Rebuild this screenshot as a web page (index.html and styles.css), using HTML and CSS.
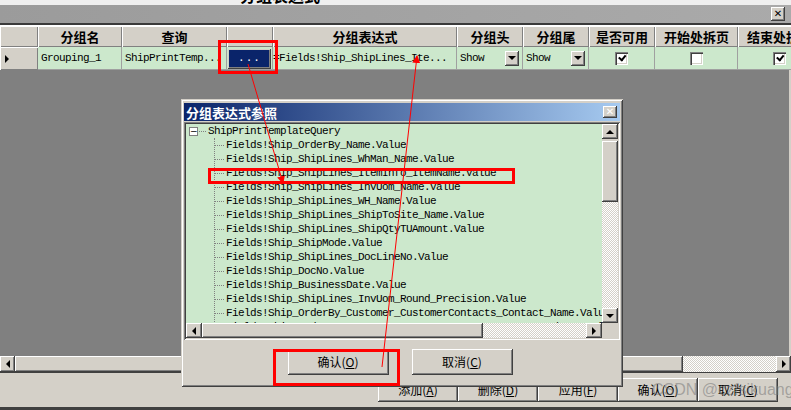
FILE: index.html
```html
<!DOCTYPE html>
<html lang="zh-CN">
<head>
    <meta charset="UTF-8">
    <title>分组表达式</title>
    <link rel="stylesheet" href="styles.css">
</head>
<body>
    <div class="window">
        <div class="caption-strip"><span class="caption-text">分组表达式</span></div>
        <div class="toolbar"><div class="x-btn">✕</div></div>
        <div class="sep"></div>
        <div class="grid">
            <div class="grid-row head">
                <div class="hcell"></div>
                <div class="hcell">分组名</div>
                <div class="hcell">查询</div>
                <div class="hcell"></div>
                <div class="hcell">分组表达式</div>
                <div class="hcell">分组头</div>
                <div class="hcell">分组尾</div>
                <div class="hcell">是否可用</div>
                <div class="hcell">开始处拆页</div>
                <div class="hcell">结束处拆页</div>
            </div>
            <div class="grid-row data">
                <div class="rowhead"><span class="arrow-right"></span></div>
                <div class="cell">Grouping_1</div>
                <div class="cell">ShipPrintTemp...</div>
                <div class="cell btn-cell"><div class="dots-btn">...</div></div>
                <div class="cell expr">=Fields!Ship_ShipLines_Ite...</div>
                <div class="cell combo"><span>Show</span><span class="drop-btn"><span class="arrow-down"></span></span></div>
                <div class="cell combo"><span>Show</span><span class="drop-btn"><span class="arrow-down"></span></span></div>
                <div class="cell center"><span class="check on"></span></div>
                <div class="cell center"><span class="check"></span></div>
                <div class="cell center"><span class="check on"></span></div>
            </div>
        </div>
        <div class="grid-empty"></div>
        <div class="hscroll">
            <div class="sb-btn"><span class="arrow-left"></span></div>
            <div class="sb-thumb main-thumb"></div>
            <div class="sb-track"></div>
            <div class="sb-btn"><span class="arrow-right"></span></div>
        </div>
        <div class="footer">
            <div class="btn">添加(<u>A</u>)</div>
            <div class="btn">删除(<u>D</u>)</div>
            <div class="btn">应用(<u>F</u>)</div>
            <div class="btn">确认(<u>O</u>)</div>
            <div class="btn">取消(<u>C</u>)</div>
        </div>
    </div>

    <div class="watermark">CSDN @czfsikuang</div>

    <div class="dialog">
        <div class="dlg-title">
            <span>分组表达式参照</span>
            <div class="x-btn small">✕</div>
        </div>
        <div class="tree-pane">
            <div class="tree">
                <div class="root"><span class="expander">−</span><span class="root-link"></span>ShipPrintTemplateQuery</div>
                <div class="children">
                    <div class="item">Fields!Ship_OrderBy_Name.Value</div>
                    <div class="item">Fields!Ship_ShipLines_WhMan_Name.Value</div>
                    <div class="item">Fields!Ship_ShipLines_ItemInfo_ItemName.Value</div>
                    <div class="item">Fields!Ship_ShipLines_InvUom_Name.Value</div>
                    <div class="item">Fields!Ship_ShipLines_WH_Name.Value</div>
                    <div class="item">Fields!Ship_ShipLines_ShipToSite_Name.Value</div>
                    <div class="item">Fields!Ship_ShipLines_ShipQtyTUAmount.Value</div>
                    <div class="item">Fields!Ship_ShipMode.Value</div>
                    <div class="item">Fields!Ship_ShipLines_DocLineNo.Value</div>
                    <div class="item">Fields!Ship_DocNo.Value</div>
                    <div class="item">Fields!Ship_BusinessDate.Value</div>
                    <div class="item">Fields!Ship_ShipLines_InvUom_Round_Precision.Value</div>
                    <div class="item">Fields!Ship_OrderBy_Customer_CustomerContacts_Contact_Name.Value</div>
                    <div class="item">Fields!Ship_OrderBy_Customer_CustomerContacts_Contact_Phone.Value</div>
                </div>
            </div>
            <div class="vscroll">
                <div class="sb-btn"><span class="arrow-up"></span></div>
                <div class="sb-thumb v-thumb"></div>
                <div class="sb-track"></div>
                <div class="sb-btn"><span class="arrow-down"></span></div>
            </div>
            <div class="hscroll small">
                <div class="sb-btn"><span class="arrow-left"></span></div>
                <div class="sb-thumb h-thumb"></div>
                <div class="sb-track"></div>
                <div class="sb-btn"><span class="arrow-right"></span></div>
            </div>
            <div class="corner"></div>
        </div>
        <div class="dlg-buttons">
            <div class="btn wide">确认(<u>O</u>)</div>
            <div class="btn wide">取消(<u>C</u>)</div>
        </div>
    </div>

    <svg class="marks" width="791" height="410" viewBox="0 0 791 410">
        <defs>
            <marker id="head" markerWidth="8" markerHeight="8" refX="7" refY="4" orient="auto" markerUnits="userSpaceOnUse">
                <path d="M0,0 L8,4 L0,8 z" fill="#ff0000"/>
            </marker>
        </defs>
        <rect x="219.5" y="41.5" width="57" height="31" fill="none" stroke="#ff0000" stroke-width="3"/>
        <rect x="209.5" y="169.5" width="304" height="13" fill="none" stroke="#ff0000" stroke-width="3"/>
        <rect x="274.5" y="350.5" width="124" height="34" fill="none" stroke="#ff0000" stroke-width="3"/>
        <line x1="248" y1="64" x2="283" y2="183" stroke="#ff0000" stroke-width="1" marker-end="url(#head)"/>
        <line x1="382" y1="367" x2="417" y2="56" stroke="#ff0000" stroke-width="1" marker-end="url(#head)"/>
    </svg>
</body>
</html>
```

FILE: styles.css
```css
* {
    box-sizing: border-box;
}
body {
    margin: 0;
    width: 791px;
    height: 410px;
    overflow: hidden;
    position: relative;
    background-color: #d4d0c8;
    font-family: "Noto Sans CJK SC", sans-serif;
    font-size: 12px;
    color: #000;
}
.window {
    display: flex;
    flex-direction: column;
    height: 410px;
}
.caption-strip {
    height: 5px;
    overflow: hidden;
    background-color: #efefef;
    padding-left: 240px;
}
.caption-text {
    display: block;
    font-weight: bold;
    font-size: 16px;
    line-height: 16px;
    margin-top: -13px;
}
.toolbar {
    height: 18px;
    background: linear-gradient(90deg, #9b9b9b, #aaaaaa);
    display: flex;
    justify-content: flex-end;
    align-items: center;
    padding-right: 6px;
}
.sep {
    height: 3px;
    border-top: 2px solid #3a3a3a;
    background-color: #ffffff;
}
.x-btn {
    width: 14px;
    height: 14px;
    background-color: #d4d0c8;
    box-shadow: inset -1px -1px #404040, inset 1px 1px #ffffff, inset -2px -2px #808080;
    font-size: 10px;
    font-weight: bold;
    line-height: 14px;
    text-align: center;
    font-family: "DejaVu Sans", sans-serif;
}
.x-btn.small {
    height: 12px;
    line-height: 12px;
    margin-right: 3px;
}

/* grid */
.grid {
    overflow: hidden;
}
.grid-row {
    display: grid;
    grid-template-columns: 38px 84px 105px 46px 184px 66px 66px 66px 83px 83px;
    width: 821px;
}
.head {
    height: 21px;
}
.hcell {
    background-color: #d4d0c8;
    box-shadow: inset 1px 1px #ffffff, inset -1px -1px #808080;
    text-align: center;
    font-weight: bold;
    font-size: 13px;
    line-height: 21px;
    white-space: nowrap;
    overflow: hidden;
}
.data {
    height: 23px;
}
.rowhead {
    background-color: #d4d0c8;
    box-shadow: inset 1px 1px #ffffff, inset -1px -1px #808080;
    display: flex;
    align-items: center;
    padding-left: 5px;
}
.cell {
    background-color: #cce8cc;
    border-right: 1px solid #a0a0a0;
    border-bottom: 1px solid #a0a0a0;
    font-family: "Liberation Mono", monospace;
    font-size: 11px;
    letter-spacing: -0.6px;
    line-height: 22px;
    padding-left: 3px;
    white-space: nowrap;
    overflow: hidden;
}
.expr {
    padding-left: 0;
}
.btn-cell {
    padding: 2px 1px 1px 1px;
}
.dots-btn {
    height: 20px;
    background-color: #0a246a;
    box-shadow: inset -1px -1px #404040, inset 1px 1px #d4d0c8, inset -2px -2px #808080;
    color: #ffffff;
    text-align: center;
    line-height: 18px;
    letter-spacing: 1px;
}
.combo {
    display: flex;
    justify-content: space-between;
    align-items: center;
    padding-right: 3px;
}
.drop-btn {
    width: 14px;
    height: 15px;
    background-color: #d4d0c8;
    box-shadow: inset -1px -1px #404040, inset 1px 1px #ffffff, inset -2px -2px #808080;
    display: flex;
    align-items: center;
    justify-content: center;
}
.center {
    display: flex;
    align-items: center;
    justify-content: center;
    padding-left: 0;
}
.check {
    width: 13px;
    height: 13px;
    background-color: #ffffff;
    box-shadow: inset 1px 1px #808080, inset 2px 2px #404040, inset -1px -1px #ffffff, inset -2px -2px #d4d0c8;
    position: relative;
}
.check.on::after {
    content: "";
    position: absolute;
    left: 3px;
    top: 2px;
    width: 5px;
    height: 3px;
    border-left: 2px solid #000;
    border-bottom: 2px solid #000;
    transform: rotate(-50deg) translate(0, 1px);
}
.grid-empty {
    flex: 1;
    background-color: #808080;
    border-right: 2px solid #d4d0c8;
}

/* arrows */
.arrow-right {
    width: 0;
    height: 0;
    border-top: 4px solid transparent;
    border-bottom: 4px solid transparent;
    border-left: 4px solid #000;
}
.arrow-left {
    width: 0;
    height: 0;
    border-top: 4px solid transparent;
    border-bottom: 4px solid transparent;
    border-right: 4px solid #000;
}
.arrow-down {
    width: 0;
    height: 0;
    border-left: 4px solid transparent;
    border-right: 4px solid transparent;
    border-top: 4px solid #000;
}
.arrow-up {
    width: 0;
    height: 0;
    border-left: 4px solid transparent;
    border-right: 4px solid transparent;
    border-bottom: 4px solid #000;
}

/* scrollbars */
.hscroll {
    height: 16px;
    display: flex;
}
.sb-btn {
    flex: 0 0 15px;
    background-color: #d4d0c8;
    box-shadow: inset -1px -1px #404040, inset 1px 1px #ffffff, inset -2px -2px #808080;
    display: flex;
    align-items: center;
    justify-content: center;
}
.sb-thumb {
    background-color: #d4d0c8;
    box-shadow: inset -1px -1px #404040, inset 1px 1px #ffffff, inset -2px -2px #808080;
}
.main-thumb {
    flex: 0 0 668px;
}
.sb-track {
    flex: 1;
    background: repeating-conic-gradient(#d4d0c8 0 25%, #ffffff 0 50%) 0 0 / 2px 2px;
}
.footer {
    height: 38px;
    border-top: 1px solid #404040;
    border-bottom: 3px solid #404040;
    display: flex;
    justify-content: flex-end;
    align-items: flex-start;
    padding: 5px 13px 0 0;
}
.btn {
    width: 80px;
    height: 24px;
    background-color: #d4d0c8;
    box-shadow: inset -1px -1px #404040, inset 1px 1px #ffffff, inset -2px -2px #808080;
    text-align: center;
    line-height: 24px;
    font-size: 12px;
}
.watermark {
    position: absolute;
    left: 652px;
    top: 381px;
    height: 18px;
    line-height: 18px;
    font-family: "Liberation Sans", sans-serif;
    font-size: 16px;
    color: rgba(120, 120, 120, 0.55);
    white-space: nowrap;
}

/* dialog */
.dialog {
    position: absolute;
    left: 181px;
    top: 99px;
    width: 442px;
    height: 288px;
    background-color: #d4d0c8;
    padding: 4px 3px 3px 3px;
    box-shadow: inset 1px 1px #d4d0c8, inset -1px -1px #404040, inset 2px 2px #ffffff, inset -2px -2px #808080;
    display: flex;
    flex-direction: column;
}
.dlg-title {
    height: 18px;
    background: linear-gradient(90deg, #0a246a, #a6caf0);
    color: #ffffff;
    font-weight: bold;
    font-size: 13px;
    display: flex;
    justify-content: space-between;
    align-items: center;
    padding-left: 2px;
}
.tree-pane {
    margin-top: 1px;
    height: 218px;
    padding: 2px;
    box-shadow: inset 1px 1px #808080, inset -1px -1px #ffffff, inset 2px 2px #404040, inset -2px -2px #d4d0c8;
    display: grid;
    grid-template-columns: 1fr 16px;
    grid-template-rows: 1fr 15px;
}
.tree {
    background-color: #cce8cc;
    overflow: hidden;
    font-family: "Liberation Mono", monospace;
    font-size: 11px;
    letter-spacing: -0.6px;
    line-height: 14px;
    white-space: nowrap;
}
.root {
    display: flex;
    align-items: center;
    height: 14px;
    padding-left: 3px;
}
.expander {
    width: 9px;
    height: 9px;
    border: 1px solid #808080;
    background-color: #ffffff;
    font-family: "DejaVu Sans", sans-serif;
    font-size: 9px;
    line-height: 6px;
    text-align: center;
    letter-spacing: 0;
}
.root-link {
    width: 7px;
    margin: 0 2px 0 1px;
    border-top: 1px dotted #808080;
}
.children {
    margin-left: 28px;
    border-left: 1px dotted #808080;
}
.item {
    position: relative;
    padding-left: 11px;
    height: 14px;
}
.item::before {
    content: "";
    position: absolute;
    left: 0;
    top: 7px;
    width: 9px;
    border-top: 1px dotted #808080;
}
.vscroll {
    display: flex;
    flex-direction: column;
}
.vscroll .sb-btn {
    flex: 0 0 15px;
}
.v-thumb {
    flex: 0 0 61px;
    margin-top: 2px;
}
.hscroll.small {
    height: 15px;
}
.h-thumb {
    flex: 0 0 281px;
}
.hscroll.small .sb-btn {
    flex: 0 0 16px;
}
.corner {
    background-color: #d4d0c8;
}
.dlg-buttons {
    flex: 1;
    display: flex;
    justify-content: center;
    gap: 23px;
    padding: 9px 4px 0 0;
}
.btn.wide {
    width: 101px;
    height: 26px;
    line-height: 26px;
}
.marks {
    position: absolute;
    left: 0;
    top: 0;
    pointer-events: none;
}
```
